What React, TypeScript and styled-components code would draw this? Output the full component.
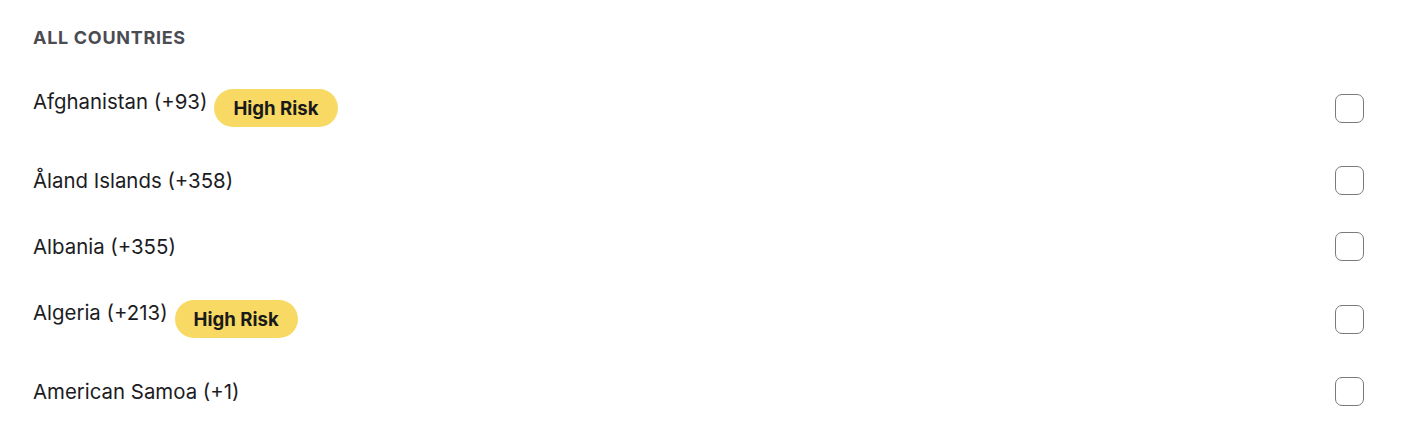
import styled, { createGlobalStyle } from 'styled-components';

const GlobalStyle = createGlobalStyle`
  body {
    margin: 0;
    background: #ffffff;
    font-family: Inter, 'Noto Sans', sans-serif;
  }
`;

const Page = styled.div`
  box-sizing: border-box;
  width: 1414px;
  min-height: 436px;
  padding: 26px 50px 32px 33px;
`;

const Heading = styled.h2`
  margin: 0 0 39px;
  font-size: 18px;
  line-height: 24px;
  font-weight: 700;
  letter-spacing: 0.7px;
  color: #4b4b52;
`;

const List = styled.ul`
  list-style: none;
  margin: 0;
  padding: 0;
  display: flex;
  flex-direction: column;
  gap: 41px;
`;

const Row = styled.li`
  display: flex;
  align-items: center;
  justify-content: space-between;
`;

const Label = styled.div`
  display: flex;
  align-items: flex-start;
  gap: 7px;
`;

const Name = styled.span`
  font-size: 20.4px;
  line-height: 25px;
  color: #1c1c1f;
`;

const Badge = styled.span`
  display: inline-flex;
  align-items: center;
  height: 38px;
  padding: 0 19px;
  border-radius: 19px;
  background: #f8d963;
  color: #1a1a1a;
  font-size: 18.6px;
  font-weight: 700;
`;

// the box overhangs the row a little so text-only rows stay at line height
const Checkbox = styled.input.attrs({ type: 'checkbox' })`
  appearance: none;
  box-sizing: border-box;
  width: 29px;
  height: 29px;
  margin: -2px 0;
  border: 1px solid #7a7a7e;
  border-radius: 7px;
  background: #fff;
`;

type Country = { name: string; code: string; highRisk?: boolean };

const countries: Country[] = [
  { name: 'Afghanistan', code: '+93', highRisk: true },
  { name: 'Åland Islands', code: '+358' },
  { name: 'Albania', code: '+355' },
  { name: 'Algeria', code: '+213', highRisk: true },
  { name: 'American Samoa', code: '+1' },
];

const App = () => {
  return (
    <>
      <GlobalStyle />
      <Page>
        <Heading>ALL COUNTRIES</Heading>
        <List>
          {countries.map((c) => (
            <Row key={c.name}>
              <Label>
                <Name>
                  {c.name} ({c.code})
                </Name>
                {c.highRisk && <Badge>High Risk</Badge>}
              </Label>
              <Checkbox aria-label={c.name} />
            </Row>
          ))}
        </List>
      </Page>
    </>
  );
};

export default App;
